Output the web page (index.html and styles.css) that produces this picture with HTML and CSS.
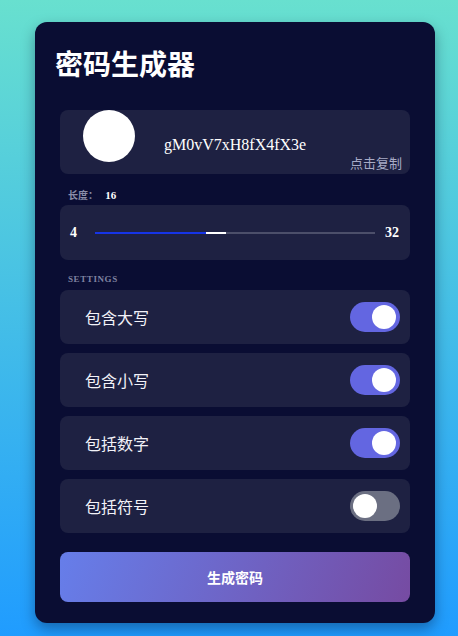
FILE: index.html
```html
<!DOCTYPE html>
<html lang="zh">
<head>
<meta charset="utf-8">
<title>密码生成器</title>
<link rel="stylesheet" href="styles.css">
</head>
<body>
<div class="card">
  <h1 class="title">密码生成器</h1>
  <div class="pw-box">
    <div class="pw-icon"></div>
    <div class="pw-text">gM0vV7xH8fX4fX3e</div>
    <div class="copy-hint">点击复制</div>
  </div>
  <div class="len-label">长度： <span class="len-value">16</span></div>
  <div class="slider-box">
    <span class="slider-num">4</span>
    <div class="track">
      <div class="fill" style="width: 111px"></div>
      <div class="thumb"></div>
    </div>
    <span class="slider-num">32</span>
  </div>
  <div class="section-label">SETTINGS</div>
  <div class="rows">
    <div class="row"><span class="row-text">包含大写</span><span class="toggle on"><span class="knob"></span></span></div>
    <div class="row"><span class="row-text">包含小写</span><span class="toggle on"><span class="knob"></span></span></div>
    <div class="row"><span class="row-text">包括数字</span><span class="toggle on"><span class="knob"></span></span></div>
    <div class="row"><span class="row-text">包括符号</span><span class="toggle"><span class="knob"></span></span></div>
  </div>
  <button class="gen-btn">生成密码</button>
</div>
</body>
</html>
```
FILE: styles.css
```css
html, body {
  margin: 0;
  padding: 0;
}
body {
  width: 458px;
  height: 636px;
  overflow: hidden;
  background: linear-gradient(to top, #209cff 0%, #68e0cf 100%);
  font-family: "Liberation Serif", "Noto Sans CJK SC", serif;
}
.card {
  box-sizing: border-box;
  width: 400px;
  margin: 22px 0 0 35px;
  padding: 26px 25px 21px;
  background: #0a0d33;
  border-radius: 12px;
  box-shadow: 0 6px 14px rgba(0, 0, 30, 0.35);
}
.title {
  margin: -2px 0 30px -5px;
  font-family: "Noto Sans CJK SC", sans-serif;
  font-size: 28px;
  line-height: 34px;
  font-weight: 700;
  color: #ffffff;
}
.pw-box {
  position: relative;
  display: flex;
  align-items: flex-start;
  height: 64px;
  padding-left: 23px;
  background: #1e2142;
  border-radius: 8px;
}
.pw-icon {
  width: 52px;
  height: 52px;
  flex: none;
  border-radius: 50%;
  background: #ffffff;
}
.pw-text {
  margin: 26px 0 0 29px;
  font-family: "Liberation Serif", serif;
  font-size: 16px;
  line-height: 18px;
  color: #ffffff;
}
.copy-hint {
  position: absolute;
  right: 8px;
  bottom: 3px;
  font-family: "Noto Sans CJK SC", sans-serif;
  font-size: 13px;
  line-height: 16px;
  color: #a8abc6;
}
.len-label {
  margin: 15px 0 4px;
  padding-left: 8px;
  font-family: "Noto Sans CJK SC", sans-serif;
  font-size: 10px;
  line-height: 12px;
  font-weight: 700;
  color: #8b8ea8;
}
.len-value {
  margin-left: 5px;
  font-family: "Liberation Serif", serif;
  font-size: 11px;
  color: #ffffff;
}
.slider-box {
  display: flex;
  align-items: center;
  height: 55px;
  padding: 0 11px 0 10px;
  background: #1e2142;
  border-radius: 8px;
}
.slider-num {
  font-family: "Liberation Serif", serif;
  font-size: 14px;
  font-weight: 700;
  color: #ffffff;
}
.track {
  position: relative;
  display: flex;
  flex: 1;
  height: 2px;
  margin: 0 10px 0 18px;
  background: #4c4f6a;
}
.fill {
  height: 2px;
  background: #1634e6;
}
.thumb {
  width: 20px;
  height: 2px;
  background: #ffffff;
}
.section-label {
  margin: 13px 0 5px;
  padding-left: 8px;
  font-family: "Liberation Serif", serif;
  font-size: 9px;
  line-height: 12px;
  font-weight: 700;
  letter-spacing: 0.6px;
  color: #7f82a0;
}
.rows {
  display: flex;
  flex-direction: column;
  gap: 9px;
}
.row {
  display: flex;
  align-items: center;
  justify-content: space-between;
  height: 54px;
  padding: 0 10px 0 25px;
  background: #1e2142;
  border-radius: 8px;
}
.row-text {
  font-family: "Noto Sans CJK SC", sans-serif;
  font-size: 16px;
  color: #f2f2f8;
}
.toggle {
  position: relative;
  display: block;
  width: 50px;
  height: 30px;
  border-radius: 15px;
  background: #6b6f82;
}
.toggle.on {
  background: #6366e1;
}
.knob {
  position: absolute;
  top: 3px;
  left: 3px;
  width: 24px;
  height: 24px;
  border-radius: 50%;
  background: #ffffff;
}
.toggle.on .knob {
  left: 22px;
}
.gen-btn {
  display: block;
  width: 100%;
  height: 50px;
  margin-top: 19px;
  border: none;
  border-radius: 8px;
  background: linear-gradient(110deg, #667eea 0%, #764ba2 100%);
  font-family: "Noto Sans CJK SC", sans-serif;
  font-size: 14px;
  font-weight: 700;
  color: #ffffff;
}
```
